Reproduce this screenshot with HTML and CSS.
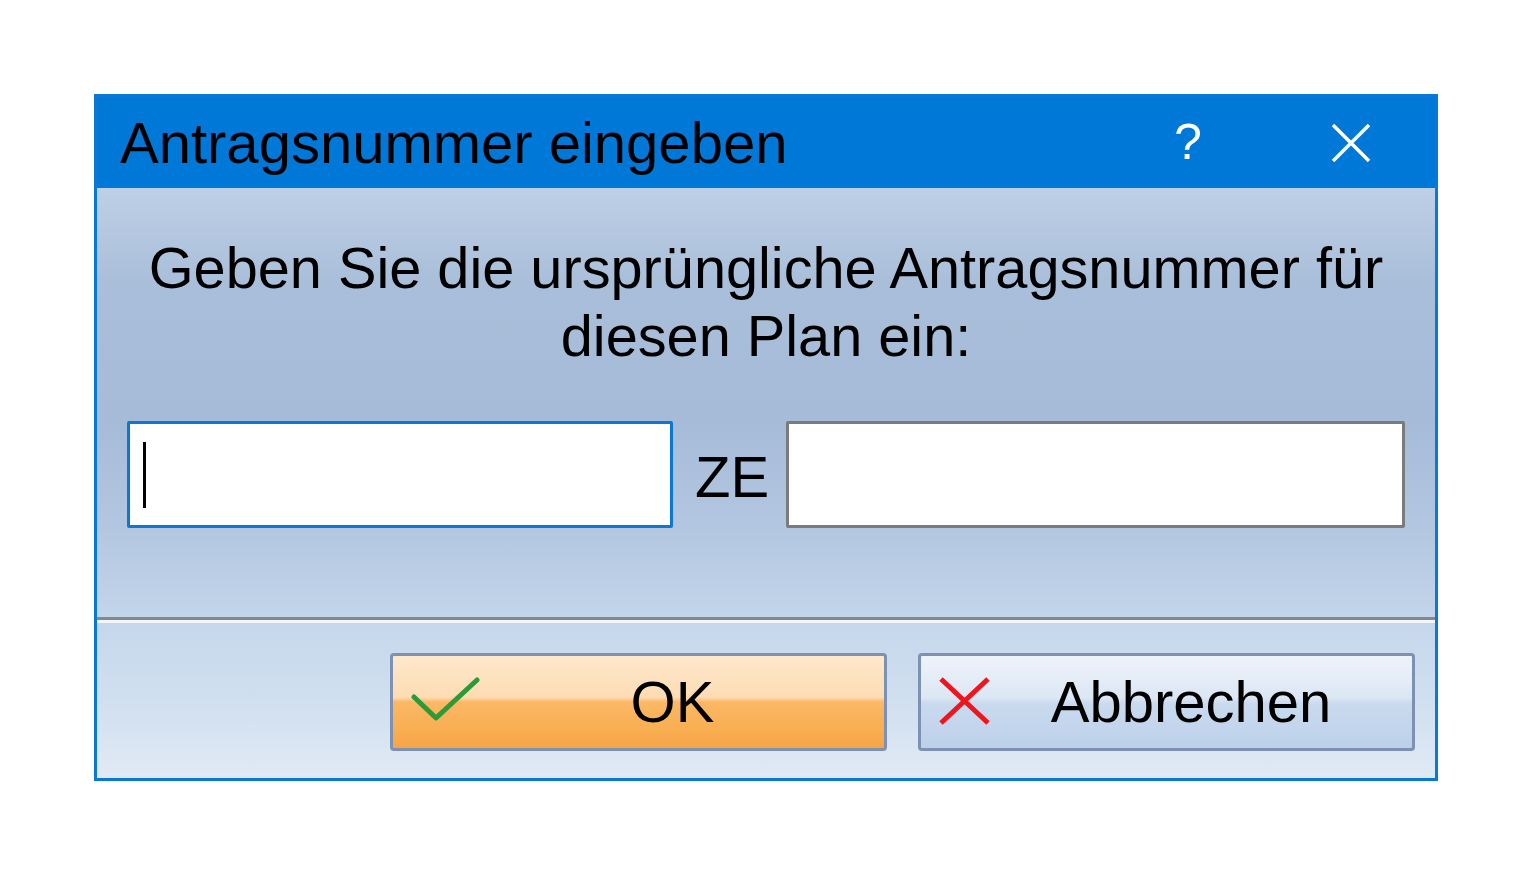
FILE: index.html
```html
<!DOCTYPE html>
<html>
	<head>
		<meta charset="UTF-8">
		<title>Antragsnummer eingeben</title>
		<link rel="stylesheet" href="styles.css">
	</head>
	<body>
		<div class="dialog">
			<div class="titlebar">
				<span class="caption">Antragsnummer eingeben</span>
				<span class="tbtn help">?</span>
				<span class="tbtn close">
					<svg width="40" height="40" viewBox="0 0 40 40"><path d="M2 2L38 38M38 2L2 38" stroke="#fff" stroke-width="3.5" fill="none"/></svg>
				</span>
			</div>
			<div class="content">
				<p class="prompt">Geben Sie die ursprüngliche Antragsnummer für<br>diesen Plan ein:</p>
				<div class="fields">
					<div class="field focus"><span class="caret"></span></div>
					<span class="ze">ZE</span>
					<div class="field wide"></div>
				</div>
			</div>
			<div class="footer">
				<div class="btn ok">
					<span class="ico">
						<svg width="70" height="50" viewBox="0 0 70 50"><path d="M3 20L25 41L66 3" stroke="#2c9a36" stroke-width="5" fill="none" stroke-linecap="round" stroke-linejoin="round"/></svg>
					</span>
					<span class="label">OK</span>
				</div>
				<div class="btn cancel">
					<span class="ico">
						<svg width="70" height="50" viewBox="0 0 70 50"><path d="M2 2L49 46M49 2L2 46" stroke="#f0141c" stroke-width="5" fill="none"/></svg>
					</span>
					<span class="label">Abbrechen</span>
				</div>
			</div>
		</div>
	</body>
</html>
```

FILE: styles.css
```css
*{margin:0;padding:0;box-sizing:border-box;}
body{background:#fff;font-family:"Liberation Sans",Arial,sans-serif;color:#000;}
.dialog{width:1344px;margin:94px 0 0 94px;border:3px solid #0a78d6;}

.titlebar{display:flex;align-items:center;height:91px;background:#0078d7;padding:0 44px 0 23px;}
.caption{flex:1;font-size:58px;line-height:91px;color:#000;}
.tbtn{width:80px;height:91px;display:flex;align-items:center;justify-content:center;}
.help{font-size:50px;line-height:91px;color:#fff;margin-right:83px;}

.content{
	height:432px;padding:46px 30px 0 30px;
	background:linear-gradient(#bed0e6 0%,#a9bed9 22%,#a6bbd8 55%,#b3c7e1 80%,#c3d5ea 100%);
	border-bottom:3px solid #85878b;
}
.prompt{font-size:57.7px;line-height:68px;text-align:center;}
.fields{display:flex;align-items:center;margin-top:51px;height:107px;}
.field{height:107px;background:#fff;border:3px solid #7b7b7b;border-radius:2px;display:flex;align-items:center;padding-left:13px;}
.field.focus{width:546px;border-color:#0b78d6;}
.field.wide{flex:1;}
.caret{width:3px;height:66px;background:#000;}
.ze{font-size:58px;line-height:68px;margin:0 17px 0 22px;padding-top:4px;}

.footer{
	height:158px;border-top:3px solid #f3f7fb;
	background:linear-gradient(#c5d7ec,#d3e1f0 60%,#e0eaf5);
	display:flex;justify-content:flex-end;align-items:center;gap:31px;padding:3px 20px 0 0;
}
.btn{width:497px;height:98px;border:3px solid #7d91b2;border-radius:4px;display:flex;align-items:center;padding-left:18px;}
.btn .ico{width:70px;height:50px;display:flex;}
.btn .label{flex:1;text-align:center;font-size:58px;line-height:68px;}
.ok .label{padding-right:20px;}
.cancel .label{padding-right:39px;}
.ok{background:linear-gradient(#fee8cd 0%,#fddcb3 45%,#fbb865 50%,#f9ae52 80%,#f6a545 100%);}
.cancel{background:linear-gradient(#eef3fa 0%,#dce7f4 45%,#c9daee 52%,#c2d5ec 80%,#bcd0e9 100%);}
```
